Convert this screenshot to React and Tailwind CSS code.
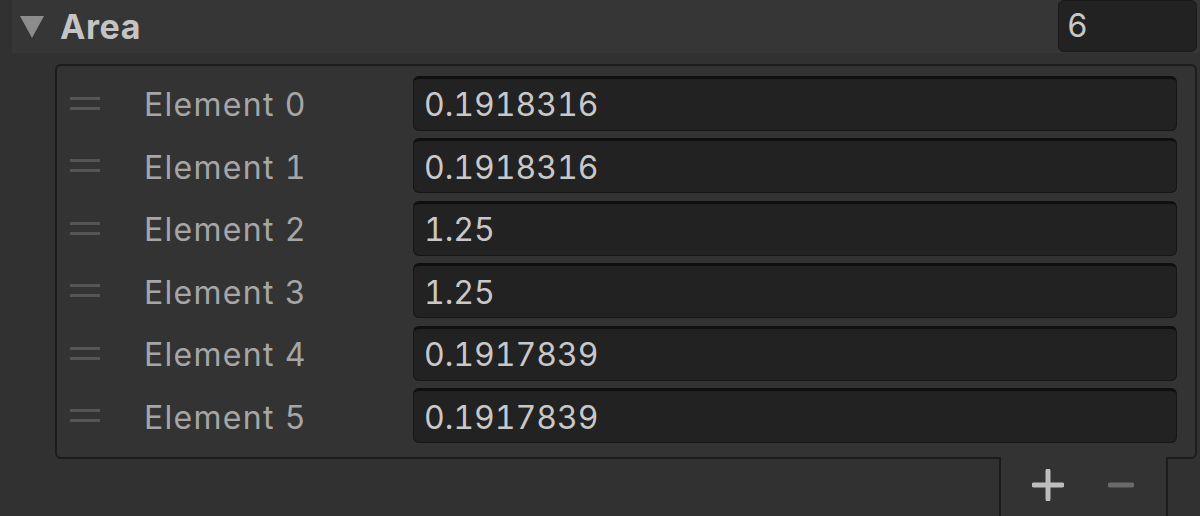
const rows = [
  ["Element 0", "0.1918316"],
  ["Element 1", "0.1918316"],
  ["Element 2", "1.25"],
  ["Element 3", "1.25"],
  ["Element 4", "0.1917839"],
  ["Element 5", "0.1917839"],
];

export default function App() {
  return (
    <div
      className="w-[1200px] h-[516px] overflow-hidden bg-[#313131] flex flex-col tabular-nums"
      style={{ fontFamily: "Inter, 'Noto Sans', sans-serif" }}
    >
      {/* header */}
      <div className="ml-[12px] h-[53px] bg-[#363636] flex items-center shrink-0">
        <svg width="24" height="22" viewBox="0 0 24 22" className="ml-[8px]">
          <polygon points="0,0 24,0 12,22" fill="#8c8c8c" />
        </svg>
        <span className="ml-[16px] text-[34px] font-bold text-[#c4c4c4] leading-none tracking-[0.6px]">
          Area
        </span>
        <div className="ml-auto mr-[3px] h-[52px] w-[139px] self-start rounded-[6px] bg-[#222222] border border-[#1a1a1a] flex items-center pl-[8px]">
          <span className="text-[32px] text-[#c8c8c8] leading-none">6</span>
        </div>
      </div>

      {/* list box */}
      <div className="mt-[11px] ml-[55px] mr-[3px] rounded-[6px] border-2 border-[#1c1c1c] bg-[#333333] pt-[6px] pb-[10px] pr-[18px] shrink-0">
        {rows.map(([label, value]) => (
          <div key={label} className="h-[62.5px] flex items-center">
            <div className="ml-[13px] w-[30px] flex flex-col gap-[7px]">
              <div className="h-[3px] bg-[#555555]" />
              <div className="h-[3px] bg-[#555555]" />
            </div>
            <span className="ml-[44px] w-[269px] pt-[4px] text-[32px] text-[#a6a6a6] leading-none tracking-[1.3px]">
              {label}
            </span>
            <div className="flex-1 h-[55px] rounded-[6px] bg-[#222222] border border-[#161616] border-t-[3px] border-t-[#0f0f0f] flex items-center pl-[10px] pt-[2px]">
              <span className="text-[32px] text-[#c8c8c8] leading-none">{value}</span>
            </div>
          </div>
        ))}
      </div>

      {/* footer */}
      <div className="flex shrink-0">
        <div className="ml-[999px] -mt-[2px] w-[169px] h-[80px] bg-[#333333] border-2 border-t-0 border-[#1c1c1c] rounded-b-[6px] flex items-start gap-[44px] pt-[12px] pl-[31px]">
          <svg width="32" height="32" viewBox="0 0 32 32">
            <path d="M16 2V30M2 16H30" stroke="#bdbdbd" strokeWidth="5" strokeLinecap="round" />
          </svg>
          <svg width="26" height="32" viewBox="0 0 26 32">
            <path d="M2 16H24" stroke="#6a6a6a" strokeWidth="5" strokeLinecap="round" />
          </svg>
        </div>
      </div>
    </div>
  );
}
